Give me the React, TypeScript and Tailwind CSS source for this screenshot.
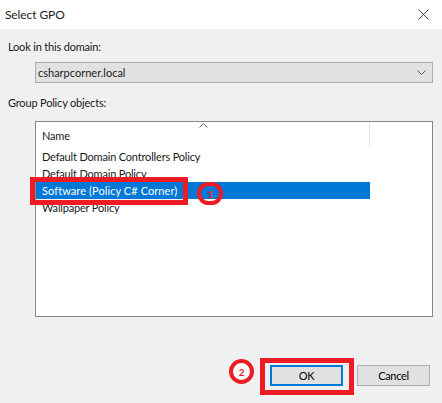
import React from "react";

export default function App() {
  return (
    <div className="relative w-[442px] h-[403px] overflow-hidden bg-[#f0f0f0] text-[11px] leading-[16px] tracking-[-0.18px] text-[#1a1a1a] font-['Lato',sans-serif]">
      <div className="h-[29px] bg-white flex items-center justify-between pl-[5px] pr-[13px] text-[#222]">
        <span className="text-[12px] tracking-[-0.1px]">Select GPO</span>
        <svg width="11" height="11" viewBox="0 0 11 11" className="mt-[-1px]">
          <path d="M0.5 0.5L10.5 10.5M10.5 0.5L0.5 10.5" stroke="#333" strokeWidth="0.9" fill="none" />
        </svg>
      </div>
      <div className="pl-[8px] pr-[9px] pt-[10px] flex flex-col">
        <div className="h-[16px]">Look in this domain:</div>
        <div className="ml-[27px] mt-[7px] h-[21px] border border-[#adadad] bg-[#e1e1e1] flex items-center justify-between pl-[2px] pr-[6px] tracking-normal">
          <span>csharpcorner.local</span>
          <svg width="9" height="6" viewBox="0 0 9 6">
            <path d="M0.5 0.5L4.5 4.5L8.5 0.5" stroke="#555" strokeWidth="1" fill="none" />
          </svg>
        </div>
        <div className="h-[16px] mt-[12px]">Group Policy objects:</div>
        <div className="ml-[27px] mt-[10px] h-[196px] border border-[#828790] bg-white flex flex-col">
          <div className="relative h-[25px] w-[334px] border-r border-[#e5e5e5] pl-[6px] pt-[6px] shrink-0">
            <span>Name</span>
            <svg width="9" height="5" viewBox="0 0 9 5" className="absolute left-[163px] top-[1px]">
              <path d="M0.5 4.5L4.5 0.5L8.5 4.5" stroke="#666" strokeWidth="1" fill="none" />
            </svg>
          </div>
          <div className="w-[334px] mt-[1px] flex flex-col">
            <div className="h-[17px] pl-[6px] flex items-center">Default Domain Controllers Policy</div>
            <div className="h-[17px] pl-[6px] flex items-center">Default Domain Policy</div>
            <div className="h-[17px] pl-[6px] flex items-center bg-[#0078d7] text-white tracking-[0.08px]">Software (Policy C# Corner)</div>
            <div className="h-[17px] pl-[6px] flex items-center">Wallpaper Policy</div>
          </div>
        </div>
        <div className="mt-[48px] flex justify-end gap-[14px] pr-[3px]">
          <button className="w-[73px] h-[21px] border-2 border-[#0078d7] bg-[#e1e1e1] leading-[16px] text-black">OK</button>
          <button className="w-[73px] h-[21px] border border-[#adadad] bg-[#e1e1e1] leading-[16px] text-black tracking-[-0.3px]">Cancel</button>
        </div>
      </div>

      <div className="absolute left-[30px] top-[177px] w-[158px] h-[28px] border-[5px] border-[#ed1c24]" />
      <div className="absolute left-[197px] top-[182px] w-[26px] h-[23px] rounded-full border-[4px] border-[#ed1c24] flex items-center justify-center text-[10px] leading-none font-bold text-[#ed1c24]">1</div>
      <div className="absolute left-[260px] top-[358px] w-[94px] h-[37px] border-[5px] border-[#ed1c24]" />
      <div className="absolute left-[229px] top-[359px] w-[25px] h-[25px] rounded-full border-[4px] border-[#ed1c24] bg-white flex items-center justify-center text-[10px] leading-none font-bold text-[#ed1c24]">2</div>
    </div>
  );
}
